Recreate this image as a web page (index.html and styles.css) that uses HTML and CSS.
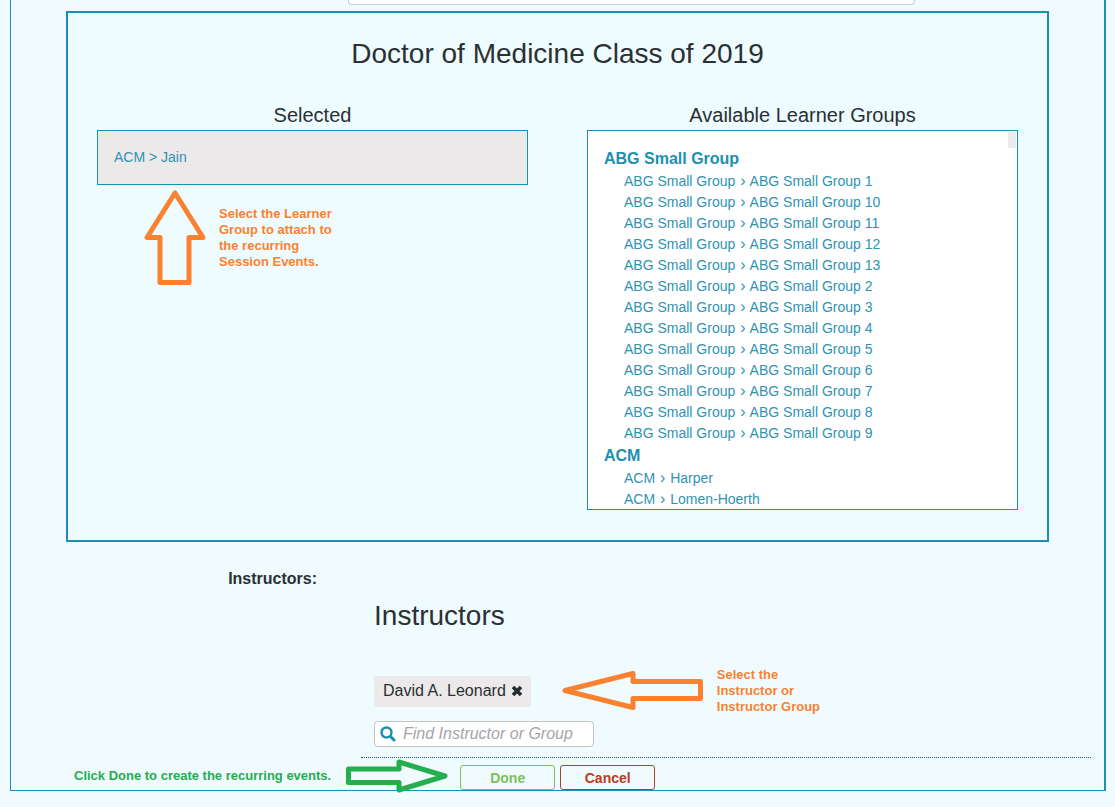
FILE: index.html
```html
<!DOCTYPE html>
<html lang="en">
<head>
<meta charset="utf-8">
<title>Recurring Session Events</title>
<link rel="stylesheet" href="styles.css">
</head>
<body>
<main class="frame">
  <div class="filter-row"><input class="filter" type="text" aria-label="Filter groups"></div>

  <section class="panel">
    <h2 class="panel-title">Doctor of Medicine Class of 2019</h2>
    <div class="columns">
      <div class="column">
        <h3 class="column-title">Selected</h3>
        <div class="selected"><a class="group-link" href="#">ACM &gt; Jain</a></div>
        <div class="note note-learner">
          <svg class="arrow" width="62" height="96" viewBox="0 0 62 96" aria-hidden="true"><path d="M31 3 L3 47.500H16V92.500H45V47.500H59Z" /></svg>
          <p class="note-text">Select the Learner<br>Group to attach to<br>the recurring<br>Session Events.</p>
        </div>
      </div>
      <div class="column">
        <h3 class="column-title">Available Learner Groups</h3>
        <div class="available">
          <span class="thumb"></span>
          <h4 class="group-name">ABG Small Group</h4>
          <ul class="group-list">
            <li><a class="group-link" href="#">ABG Small Group <span class="sep">›</span> ABG Small Group 1</a></li>
            <li><a class="group-link" href="#">ABG Small Group <span class="sep">›</span> ABG Small Group 10</a></li>
            <li><a class="group-link" href="#">ABG Small Group <span class="sep">›</span> ABG Small Group 11</a></li>
            <li><a class="group-link" href="#">ABG Small Group <span class="sep">›</span> ABG Small Group 12</a></li>
            <li><a class="group-link" href="#">ABG Small Group <span class="sep">›</span> ABG Small Group 13</a></li>
            <li><a class="group-link" href="#">ABG Small Group <span class="sep">›</span> ABG Small Group 2</a></li>
            <li><a class="group-link" href="#">ABG Small Group <span class="sep">›</span> ABG Small Group 3</a></li>
            <li><a class="group-link" href="#">ABG Small Group <span class="sep">›</span> ABG Small Group 4</a></li>
            <li><a class="group-link" href="#">ABG Small Group <span class="sep">›</span> ABG Small Group 5</a></li>
            <li><a class="group-link" href="#">ABG Small Group <span class="sep">›</span> ABG Small Group 6</a></li>
            <li><a class="group-link" href="#">ABG Small Group <span class="sep">›</span> ABG Small Group 7</a></li>
            <li><a class="group-link" href="#">ABG Small Group <span class="sep">›</span> ABG Small Group 8</a></li>
            <li><a class="group-link" href="#">ABG Small Group <span class="sep">›</span> ABG Small Group 9</a></li>
          </ul>
          <h4 class="group-name">ACM</h4>
          <ul class="group-list">
            <li><a class="group-link" href="#">ACM <span class="sep">›</span> Harper</a></li>
            <li><a class="group-link" href="#">ACM <span class="sep">›</span> Lomen-Hoerth</a></li>
          </ul>
        </div>
      </div>
    </div>
  </section>

  <section class="form-row">
    <label class="form-label" for="find">Instructors:</label>
    <div class="form-body">
      <h2 class="form-title">Instructors</h2>
      <div class="chip-row">
        <button class="chip" type="button">David A. Leonard
          <svg width="12" height="12" viewBox="0 0 12 12" aria-hidden="true"><path d="M2 2 10 10M10 2 2 10" stroke="#262b2d" stroke-width="3.600"/></svg>
        </button>
        <div class="note">
          <svg class="arrow" width="144" height="42" viewBox="0 0 144 42" aria-hidden="true"><path d="M4 20.500 72 3.500V11.500H139.500V28.500H72V37.500Z" /></svg>
          <p class="note-text">Select the<br>Instructor or<br>Instructor Group</p>
        </div>
      </div>
      <div class="search">
        <svg width="16" height="16" viewBox="0 0 16 16" aria-hidden="true"><circle cx="6.500" cy="6.500" r="5" fill="none" stroke="#1c90b3" stroke-width="2.400"/><path d="M10.500 10.500 14 14" stroke="#1c90b3" stroke-width="3" stroke-linecap="round"/></svg>
        <input class="search-input" id="find" type="text" placeholder="Find Instructor or Group">
      </div>
    </div>
  </section>

  <div class="actions">
    <div class="note note-done">
      <p class="note-text">Click Done to create the recurring events.</p>
      <svg class="arrow" width="104" height="36" viewBox="0 0 104 36" aria-hidden="true"><path d="M2.500 11H53V4L99 18 53 32V24.500H2.500Z" /></svg>
    </div>
    <button class="button done" type="button">Done</button>
    <button class="button cancel" type="button">Cancel</button>
  </div>
</main>
</body>
</html>
```
FILE: styles.css
```css
* { box-sizing: border-box; }

body {
  margin: 0;
  background: #effbff;
  color: #2b3033;
  font-family: "Liberation Sans", Arial, sans-serif;
}

h2, h3, h4, p, ul { margin: 0; padding: 0; font-weight: normal; }
ul { list-style: none; }
button, input { font-family: inherit; }

.frame {
  margin: 0 9px 16px 10px;
  border: solid #1c90b3;
  border-width: 0 2px 1px 1px;
}

.filter-row { height: 11px; padding: 0 189px 0 337px; }

.filter {
  display: block;
  width: 100%;
  height: 5px;
  padding: 0;
  border: 1px solid #c4cdd0;
  border-top: 0;
  border-radius: 0 0 4px 4px;
  background: #fff;
}

.panel {
  margin: 0 55px;
  padding: 25px 29px 30px;
  border: 2px solid #1c90b3;
  background: #eefbff;
}

.panel-title { font-size: 28px; line-height: 32px; text-align: center; }

.columns {
  display: grid;
  grid-template-columns: 1fr 1fr;
  gap: 59px;
  margin-top: 33px;
}

.column-title { font-size: 20px; line-height: 24px; margin-bottom: 3px; text-align: center; }

.selected {
  padding: 16px;
  border: 1px solid #1c90b3;
  background: #ebe9e9;
  line-height: 21px;
}

.group-link { color: #2f93b3; font-size: 14px; text-decoration: none; }
.selected .group-link { display: block; }

.available {
  position: relative;
  height: 380px;
  padding: 16px 16px 0;
  overflow: hidden;
  border: 1px solid #1c90b3;
  background: #fff;
}

.thumb {
  position: absolute;
  top: 1px;
  right: 1px;
  width: 8px;
  height: 16px;
  background: #ebebeb;
}

.group-name { color: #1c90b3; font-size: 16px; font-weight: bold; line-height: 24px; }
.group-list { padding-left: 20px; }
.group-list li { height: 21px; line-height: 21px; }
.group-list .group-link { display: block; }
.sep { padding: 0 1px; font-size: 16px; line-height: 16px; }

.note { display: flex; align-items: center; color: #f98230; }
.note-text { font-size: 13px; font-weight: bold; line-height: 16px; }
.arrow { flex: none; fill: none; stroke: currentColor; stroke-width: 5; stroke-linejoin: round; }
.note-learner { gap: 13px; margin: 5px 0 0 47px; }

.form-row {
  display: grid;
  grid-template-columns: 28% 1fr;
  column-gap: 44px;
  padding-top: 25px;
}

.form-label { font-size: 16px; font-weight: bold; line-height: 24px; text-align: right; }

.form-body {
  margin-right: 13px;
  padding: 33px 0 10px 13px;
  border-bottom: 1px dotted #1a5a72;
}

.form-title { font-size: 28px; line-height: 32px; }

.chip-row { display: flex; align-items: center; gap: 30px; margin-top: 35px; }

.chip {
  display: flex;
  align-items: center;
  gap: 5px;
  height: 31px;
  padding: 0 8px 0 9px;
  border: 0;
  border-radius: 3px;
  background: #ebe9e9;
  color: #2b3033;
  font-size: 16px;
}

.chip-row .note { gap: 12px; }

.search {
  display: flex;
  align-items: center;
  gap: 7px;
  width: 220px;
  height: 26px;
  margin-top: 6px;
  padding: 0 6px 0 5px;
  border: 1px solid #c4c4c4;
  border-radius: 4px;
  background: #fff;
}

.search svg { flex: none; }

.search-input {
  flex: 1;
  min-width: 0;
  padding: 0;
  border: 0;
  outline: 0;
  background: none;
  font-size: 16px;
}

.search-input::placeholder { color: #a3a5a8; font-style: italic; }

.actions { display: flex; align-items: flex-end; gap: 5px; padding-left: 63px; }
.note-done { gap: 15px; margin-right: 5px; color: #25ae4e; }
.note-done .note-text { padding-top: 4px; }
.note-done .arrow { margin-bottom: -4px; }

.button {
  width: 95px;
  height: 25px;
  padding: 0;
  border: 1px solid;
  border-radius: 3px;
  background: #effbff;
  font-size: 14px;
  font-weight: bold;
}

.done { border-color: #7fbf59; color: #7fbf59; }
.cancel { border-color: #bd3c22; color: #bd3c22; }
```
